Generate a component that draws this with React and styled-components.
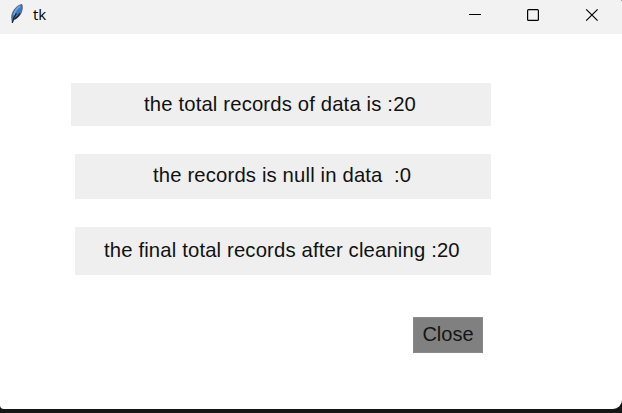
import React from "react";
import styled, { createGlobalStyle } from "styled-components";

const GlobalStyle = createGlobalStyle`
  * { box-sizing: border-box; }
  body { margin: 0; background: #141616; overflow: hidden; }
`;

const Window = styled.div`
  width: 622px;
  height: 409px;
  display: flex;
  flex-direction: column;
  background: #fff;
  border-radius: 0 2px 9px 4px;
  overflow: hidden;
`;

const TitleBar = styled.header`
  height: 34px;
  flex: none;
  display: flex;
  align-items: flex-start;
  background: #f2f2f2;
`;

const Feather = styled.svg`
  width: 16px;
  height: 20px;
  margin: 4px 0 0 9px;
`;

const Title = styled.span`
  flex: 1;
  margin-left: 8px;
  font: 15px/28px "Open Sans", "Noto Sans", sans-serif;
  color: #000;
`;

const Controls = styled.div`
  display: flex;
  height: 30px;
  margin-right: 2px;
`;

const ControlButton = styled.button`
  width: 58px;
  height: 30px;
  padding: 0;
  border: 0;
  background: none;

  svg { display: block; margin: 0 auto; }
`;

const Content = styled.main`
  display: flex;
  flex-direction: column;
  align-items: flex-end;
  padding: 49px 131px 0 0;
  font: 20px "Liberation Sans", Arial, sans-serif;
  color: #111;
`;

const Label = styled.div`
  width: ${(p) => p.$width}px;
  height: ${(p) => p.$height}px;
  margin-bottom: 28px;
  padding-left: ${(p) => p.$indent}px;
  font-size: 20.3px;
  letter-spacing: 0.15px;
  line-height: ${(p) => p.$lineHeight}px;
  background: #efefef;
  white-space: pre;
`;

const CloseButton = styled.button`
  width: 70px;
  height: 36px;
  margin: 14px 8px 0 0;
  padding: 0 0 2px;
  border: 1px solid #8a8a8a;
  background: #808080;
  font: inherit;
  line-height: 32px;
  color: #151515;
`;

const labels = [
  { text: "the total records of data is :20", width: 420, height: 43, indent: 73, lineHeight: 42 },
  { text: "the records is null in data  :0", width: 416, height: 45, indent: 78, lineHeight: 43 },
  { text: "the final total records after cleaning :20", width: 416, height: 48, indent: 29, lineHeight: 47 },
];

export default function App() {
  return (
    <>
      <GlobalStyle />
      <Window>
        <TitleBar>
          <Feather viewBox="0 0 16 20">
            <path d="M3.4 19 2.8 14.5C2 10 5.6 2 12.8.4c1.4 3.6 0 11.4-6.6 14.8l-1.8.8z" fill="#3f78be" stroke="#565b60" strokeWidth=".9" />
            <path d="M11.2 2.2c-3.6 2-5.6 5.4-6.3 9.2" fill="none" stroke="#6fa4e0" strokeWidth="1.8" />
            <path d="M3.3 18.8 5 13.4 7.4 9.4M5.6 14.8c2.8-1.6 4.2-3.2 5.2-5.6" fill="none" stroke="#171b20" strokeWidth="1.1" />
          </Feather>
          <Title>tk</Title>
          <Controls>
            <ControlButton aria-label="Minimize">
              <svg width="58" height="30"><path d="M23 14.5h12" stroke="#000" /></svg>
            </ControlButton>
            <ControlButton aria-label="Maximize">
              <svg width="58" height="30"><rect x="23.6" y="9.6" width="10.8" height="10.8" rx="1" fill="none" stroke="#000" strokeWidth="1.2" /></svg>
            </ControlButton>
            <ControlButton aria-label="Close window">
              <svg width="58" height="30"><path d="M24.2 9.3 35.6 20.7M35.6 9.3 24.2 20.7" stroke="#000" strokeWidth="1.2" /></svg>
            </ControlButton>
          </Controls>
        </TitleBar>
        <Content>
          {labels.map((l) => (
            <Label key={l.text} $width={l.width} $height={l.height} $indent={l.indent} $lineHeight={l.lineHeight}>
              {l.text}
            </Label>
          ))}
          <CloseButton>Close</CloseButton>
        </Content>
      </Window>
    </>
  );
}
